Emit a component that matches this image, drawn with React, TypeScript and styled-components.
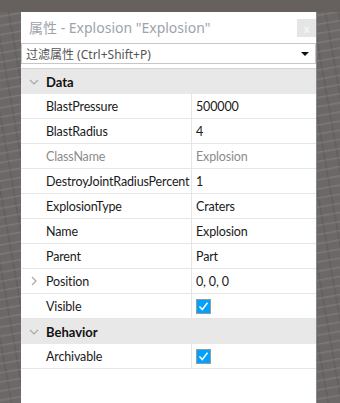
import React from "react";
import styled, { createGlobalStyle } from "styled-components";

const Global = createGlobalStyle`
  html, body { margin: 0; padding: 0; }
  body {
    width: 340px;
    height: 403px;
    overflow: hidden;
    background-color: #6c6868;
    background-image:
      repeating-linear-gradient(170deg, rgba(255,255,255,0.0) 0px, rgba(255,255,255,0.0) 6px, rgba(200,200,200,0.18) 7px, rgba(255,255,255,0.0) 9px),
      repeating-linear-gradient(80deg, rgba(0,0,0,0.0) 0px, rgba(0,0,0,0.0) 10px, rgba(40,40,40,0.15) 11px, rgba(0,0,0,0.0) 13px);
    font-family: "Lato", "Noto Sans CJK SC", sans-serif;
  }
`;

const Scene = styled.div`
  padding: 12px 0 0 21px;
  height: 391px;
  background: linear-gradient(#66615f 0px, #66615f 12px, transparent 12px);
`;

const Panel = styled.div`
  width: 295px;
  height: 391px;
  background: #fff;
  border-right: 1px solid #8a8888;
  display: flex;
  flex-direction: column;
`;

const TitleBar = styled.div`
  height: 31px;
  display: flex;
  align-items: center;
  justify-content: space-between;
  padding-left: 8px;
`;

const Title = styled.span`
  color: #9da3ad;
  font-size: 14px;
  font-family: "Noto Sans", "Noto Sans CJK SC", sans-serif;
  margin-top: -1px;
`;

const CloseButton = styled.div`
  width: 19px;
  height: 18px;
  margin-top: 1px;
  background: #e5e5e5;
  color: #f6f6f6;
  font-size: 11px;
  font-weight: bold;
  display: flex;
  align-items: center;
  justify-content: center;
`;

const Filter = styled.div`
  height: 19px;
  border: 1px solid #c6c6c6;
  display: flex;
  align-items: center;
  justify-content: space-between;
  padding: 0 6px 0 4px;
`;

const FilterText = styled.span`
  color: #555;
  font-size: 12px;
  font-family: "Noto Sans", "Noto Sans CJK SC", sans-serif;
`;

const Arrow = styled.div`
  width: 0;
  height: 0;
  border-left: 4px solid transparent;
  border-right: 4px solid transparent;
  border-top: 4px solid #111;
`;

const List = styled.div`
  margin-top: 4px;
  border-top: 1px solid #d4d4d4;
  display: flex;
  flex-direction: column;
`;

const Header = styled.div`
  height: 25px;
  background: #e8e8e8;
  display: flex;
  align-items: center;
  font-weight: bold;
  font-size: 13px;
  color: #111;
`;

const Row = styled.div`
  height: 24px;
  border-bottom: 1px solid #e6e6e6;
  display: grid;
  grid-template-columns: 171px 1fr;
  font-size: 12.5px;
  letter-spacing: -0.15px;
`;

const IconCell = styled.div`
  width: 25px;
  display: flex;
  align-items: center;
  justify-content: center;
  flex-shrink: 0;
`;

const NameCell = styled.div<{ $dim?: boolean }>`
  display: flex;
  align-items: center;
  border-right: 1px solid #e6e6e6;
  white-space: nowrap;
  overflow: hidden;
  color: ${(p) => (p.$dim ? "#8c8c8c" : "#1a1a1a")};
`;

const ValueCell = styled.div<{ $dim?: boolean }>`
  display: flex;
  align-items: center;
  padding-left: 4px;
  color: ${(p) => (p.$dim ? "#8c8c8c" : "#1a1a1a")};
`;

const Check = styled.div`
  width: 13px;
  height: 13px;
  background: #00a2ff;
  border: 1px solid #9a9a9a;
  display: flex;
  align-items: center;
  justify-content: center;
`;

const Chevron = ({ dir }: { dir: "down" | "right" }) => (
  <svg width="10" height="10" viewBox="0 0 10 10">
    {dir === "down" ? (
      <path d="M1 3 L5 7 L9 3" stroke="#a8a8a8" strokeWidth="1.2" fill="none" />
    ) : (
      <path d="M3 1 L7 5 L3 9" stroke="#a8a8a8" strokeWidth="1.2" fill="none" />
    )}
  </svg>
);

const CheckBox = () => (
  <Check>
    <svg width="11" height="11" viewBox="0 0 11 11">
      <path d="M1.5 5.5 L4.3 8.5 L9.5 1.8" stroke="#fff" strokeWidth="1.5" fill="none" />
    </svg>
  </Check>
);

type Prop = { name: string; value: React.ReactNode; dim?: boolean; expand?: boolean };

const data: Prop[] = [
  { name: "BlastPressure", value: "500000" },
  { name: "BlastRadius", value: "4" },
  { name: "ClassName", value: "Explosion", dim: true },
  { name: "DestroyJointRadiusPercent", value: "1" },
  { name: "ExplosionType", value: "Craters" },
  { name: "Name", value: "Explosion" },
  { name: "Parent", value: "Part" },
  { name: "Position", value: "0, 0, 0", expand: true },
  { name: "Visible", value: <CheckBox /> },
];

const behavior: Prop[] = [{ name: "Archivable", value: <CheckBox /> }];

const PropRow = ({ p }: { p: Prop }) => (
  <Row>
    <NameCell $dim={p.dim}>
      <IconCell>{p.expand && <Chevron dir="right" />}</IconCell>
      {p.name}
    </NameCell>
    <ValueCell $dim={p.dim}>{p.value}</ValueCell>
  </Row>
);

const Section = ({ title, props }: { title: string; props: Prop[] }) => (
  <>
    <Header>
      <IconCell>
        <Chevron dir="down" />
      </IconCell>
      {title}
    </Header>
    {props.map((p) => (
      <PropRow key={p.name} p={p} />
    ))}
  </>
);

export default function App() {
  return (
    <>
      <Global />
      <Scene>
        <Panel>
          <TitleBar>
            <Title>属性 - Explosion "Explosion"</Title>
            <CloseButton>x</CloseButton>
          </TitleBar>
          <Filter>
            <FilterText>过滤属性 (Ctrl+Shift+P)</FilterText>
            <Arrow />
          </Filter>
          <List>
            <Section title="Data" props={data} />
            <Section title="Behavior" props={behavior} />
          </List>
        </Panel>
      </Scene>
    </>
  );
}
